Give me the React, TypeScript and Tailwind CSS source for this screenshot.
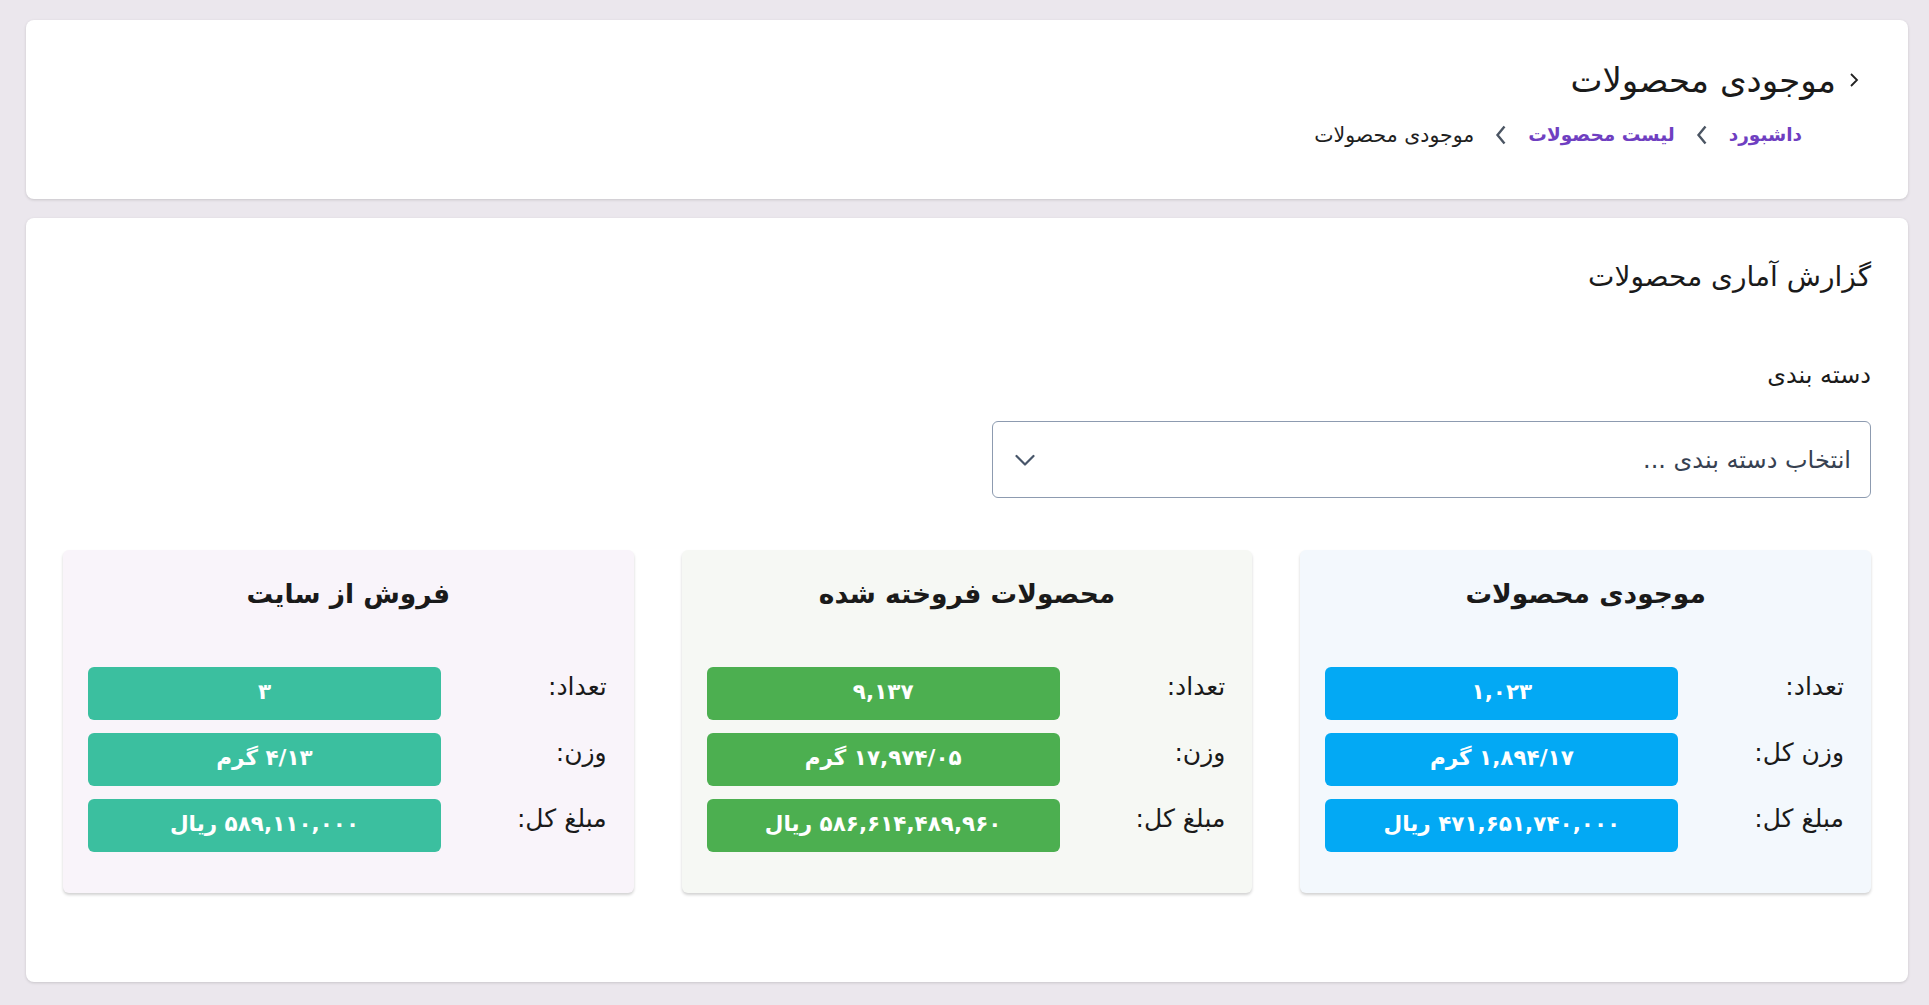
const font = { fontFamily: '"DejaVu Sans", sans-serif' };

const stats = [
  {
    title: "موجودی محصولات",
    bg: "bg-[#f3f8fd]",
    badge: "bg-[#03a9f4]",
    rows: [
      { label: "تعداد:", value: "۱,۰۲۳" },
      { label: "وزن کل:", value: "۱,۸۹۴/۱۷ گرم" },
      { label: "مبلغ کل:", value: "۴۷۱,۶۵۱,۷۴۰,۰۰۰ ریال" },
    ],
  },
  {
    title: "محصولات فروخته شده",
    bg: "bg-[#f6f8f4]",
    badge: "bg-[#4caf50]",
    rows: [
      { label: "تعداد:", value: "۹,۱۳۷" },
      { label: "وزن:", value: "۱۷,۹۷۴/۰۵ گرم" },
      { label: "مبلغ کل:", value: "۵۸۶,۶۱۴,۴۸۹,۹۶۰ ریال" },
    ],
  },
  {
    title: "فروش از سایت",
    bg: "bg-[#f9f4fa]",
    badge: "bg-[#3bbf9f]",
    rows: [
      { label: "تعداد:", value: "۳" },
      { label: "وزن:", value: "۴/۱۳ گرم" },
      { label: "مبلغ کل:", value: "۵۸۹,۱۱۰,۰۰۰ ریال" },
    ],
  },
];

// breadcrumb separator, points left in rtl
const Crumb = () => (
  <svg width="12" height="20" viewBox="0 0 12 20" className="mx-[21px] shrink-0">
    <path d="M9.5 1.5L2.5 10l7 8.5" fill="none" stroke="#4b5563" strokeWidth="2.4" />
  </svg>
);

const StatCard = ({ s }: { s: (typeof stats)[number] }) => (
  <div className={`${s.bg} h-[343px] rounded-md shadow-[0_2px_3px_rgba(0,0,0,0.18)] px-[25px] pt-[26px]`}>
    <h3 className="text-center text-[26.5px] font-bold text-[#1a1a1a] leading-[36px]">{s.title}</h3>
    <div className="mt-[55px] flex flex-col gap-[13px]">
      {s.rows.map((r) => (
        <div key={r.label} className="flex items-center justify-between">
          <span className="text-[25px] leading-[32px] text-[#1a1a1a] pr-[2px] -mt-[14px]">{r.label}</span>
          <div className={`${s.badge} w-[353px] h-[53px] rounded-md flex items-center justify-center text-white text-[21.5px] leading-[30px] font-bold pb-[4px]`}>
            {r.value}
          </div>
        </div>
      ))}
    </div>
  </div>
);

export default function App() {
  return (
    <div dir="rtl" style={font} className="min-h-screen bg-[#ebe7ed] pt-[20px] pr-[21px] pl-[26px] pb-[23px] flex flex-col gap-[19px]">
      <div className="h-[179px] rounded-lg bg-white shadow-[0_1px_3px_rgba(0,0,0,0.15)] pr-[49px] pt-[38px]">
        <div className="flex items-center gap-[13px]">
          <svg width="10" height="16" viewBox="0 0 10 16">
            <path d="M2 2l6 6-6 6" fill="none" stroke="#222" strokeWidth="1.8" />
          </svg>
          <h1 className="text-[34px] text-[#1a1a1a] leading-[44px]">موجودی محصولات</h1>
        </div>
        <nav className="mt-[18px] mr-[57px] flex items-center leading-[30px]">
          <span className="text-[#6f3fc1] font-bold text-[18.5px]">داشبورد</span>
          <Crumb />
          <span className="text-[#6f3fc1] font-bold text-[18.5px]">لیست محصولات</span>
          <Crumb />
          <span className="text-[#1f1f1f] text-[20.5px]">موجودی محصولات</span>
        </nav>
      </div>

      <div className="h-[764px] rounded-lg bg-white shadow-[0_1px_3px_rgba(0,0,0,0.15)] px-[37px] pt-[42px]">
        <h2 className="text-[28px] text-[#1a1a1a] leading-[34px]">گزارش آماری محصولات</h2>
        <label className="block mt-[66px] text-[24px] text-[#1a1a1a] leading-[30px]">دسته بندی</label>
        <div className="mt-[31px] w-[879px] h-[77px] rounded-md border border-[#8d9bb0] flex items-center justify-between pr-[19px] pl-[20px]">
          <span className="text-[24px] leading-[32px] text-[#374151]">انتخاب دسته بندی ...</span>
          <svg width="24" height="24" viewBox="0 0 24 24">
            <path d="M3.5 8l8.5 8.5 8.5-8.5" fill="none" stroke="#475569" strokeWidth="2.2" strokeLinecap="round" strokeLinejoin="round" />
          </svg>
        </div>
        <div className="mt-[52px] grid grid-cols-3 gap-[48px]">
          {stats.map((s) => (
            <StatCard key={s.title} s={s} />
          ))}
        </div>
      </div>
    </div>
  );
}
